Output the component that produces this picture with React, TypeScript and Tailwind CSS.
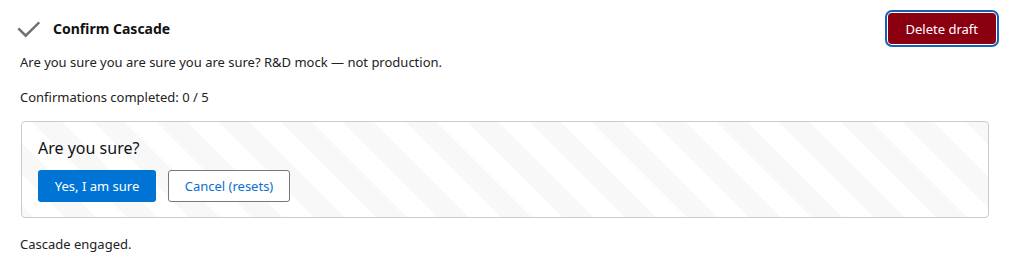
import React from "react";

export default function App() {
  return (
    <div className="px-5 pt-[10px] text-[13px] leading-[18px] text-[#222]" style={{ fontFamily: '"Noto Sans", sans-serif' }}>
      <div className="flex items-center justify-between">
        <div className="flex items-center">
          <svg width="24" height="18" viewBox="0 0 24 18" className="-ml-[4px] mr-[13px]" fill="none">
            <path d="M2.3 6.3 L9.7 13.7 L23.3 0.3" stroke="#707070" strokeWidth="2.5" transform="translate(0 2)" />
          </svg>
          <span className="text-[14px] font-bold text-[#111]">Confirm Cascade</span>
        </div>
        <button className="-mr-[6px] my-[3px] h-[31px] rounded-[4px] bg-[#8b0010] px-[18px] text-[13px] text-white outline outline-2 outline-offset-1 outline-[#1462b8]">
          Delete draft
        </button>
      </div>
      <p className="mt-[6px]">Are you sure you are sure you are sure? R&amp;D mock — not production.</p>
      <p className="mt-[17px]">Confirmations completed: 0 / 5</p>
      <div
        className="ml-[1px] mr-[1px] mt-[15px] rounded-[4px] border border-[#cccccc] pb-[15px] pl-4 pr-4 pt-4"
        style={{
          backgroundImage:
            "repeating-linear-gradient(45deg, #f8f8f8 0px, #f8f8f8 8px, #ffffff 8px, #ffffff 30px, #f8f8f8 30px, #f8f8f8 44px)",
        }}
      >
        <div className="text-[16px] leading-[20px] text-[#111]">Are you sure?</div>
        <div className="mt-3 flex gap-3">
          <button className="h-8 w-[118px] rounded-[3px] bg-[#0074d4] text-[13px] text-white">Yes, I am sure</button>
          <button className="h-8 w-[122px] rounded-[3px] border border-[#777] bg-white text-[13px] text-[#0a6fd0]">
            Cancel (resets)
          </button>
        </div>
      </div>
      <p className="mt-[17px]">Cascade engaged.</p>
    </div>
  );
}
